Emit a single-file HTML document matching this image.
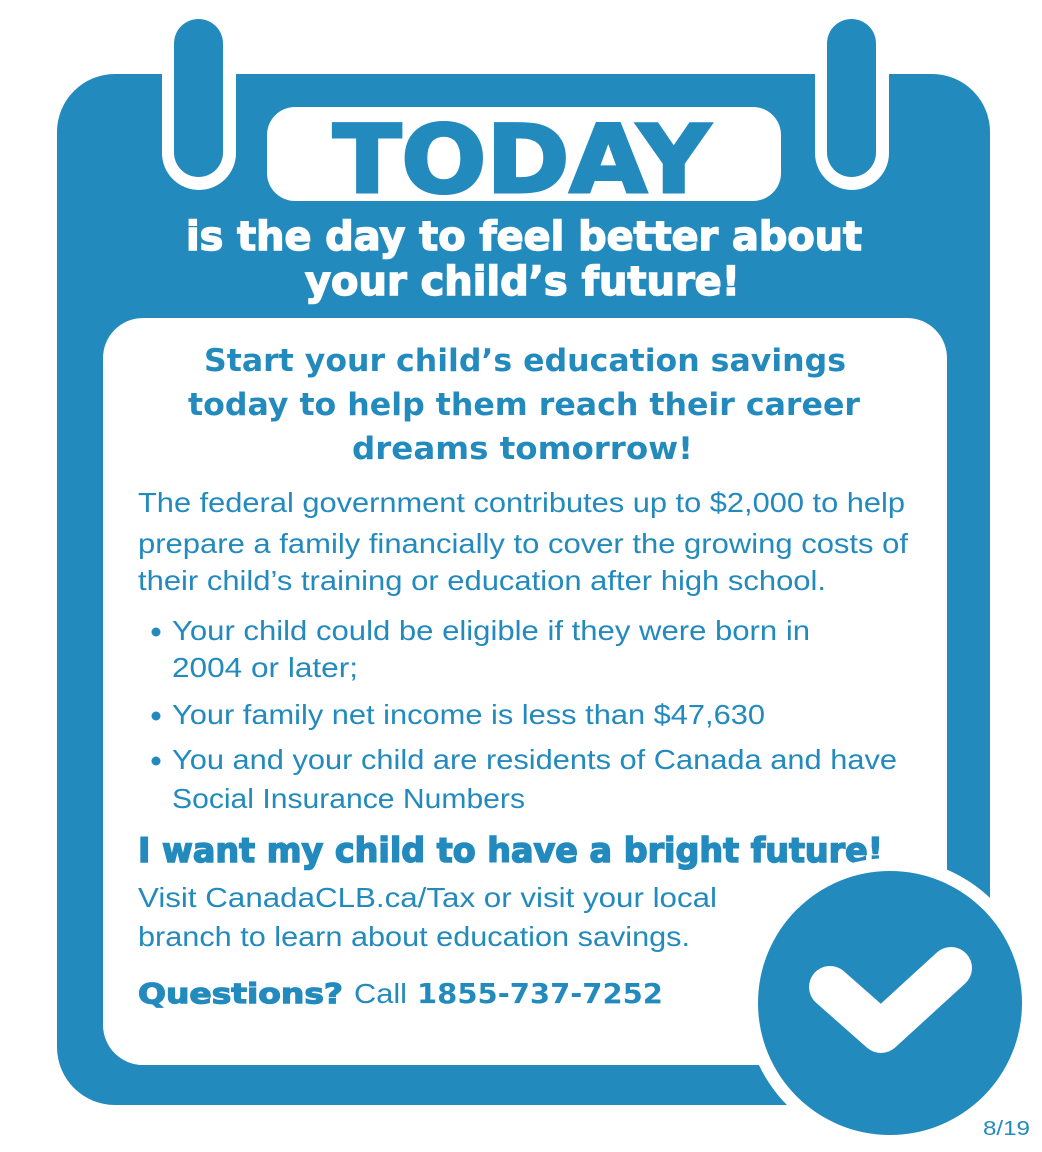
<!DOCTYPE html>
<html><head><meta charset="utf-8"><style>
html,body{margin:0;padding:0;background:#fff;width:1042px;height:1152px;overflow:hidden}
svg{display:block}
text{font-family:"Liberation Sans","DejaVu Sans",sans-serif;}
.h{font-family:"DejaVu Sans","Liberation Sans",sans-serif;font-weight:bold}
</style></head><body>
<svg width="1042" height="1152" viewBox="0 0 1042 1152" xmlns="http://www.w3.org/2000/svg">
<rect x="57" y="74" width="933" height="1031" rx="58" fill="#238abe"/>
<!-- clips -->
<rect x="162" y="10" width="74" height="180" rx="37" fill="#fff"/>
<rect x="174" y="19" width="49" height="158" rx="24.5" fill="#238abe"/>
<rect x="815" y="10" width="74" height="180" rx="37" fill="#fff"/>
<rect x="827" y="19" width="49" height="158" rx="24.5" fill="#238abe"/>
<!-- TODAY box -->
<rect x="267" y="107" width="514" height="94" rx="28" fill="#fff"/>
<text class="h" x="333" y="192" font-size="94" fill="#238abe" stroke="#238abe" stroke-width="3" textLength="377" lengthAdjust="spacingAndGlyphs">TODAY</text>
<text class="h" x="186" y="250" font-size="40" fill="#fff" stroke="#fff" stroke-width="1.5" textLength="676" lengthAdjust="spacingAndGlyphs">is the day to feel better about</text>
<text class="h" x="305" y="295" font-size="40" fill="#fff" stroke="#fff" stroke-width="1.5" textLength="435" lengthAdjust="spacingAndGlyphs">your child’s future!</text>
<!-- white panel -->
<rect x="103" y="318" width="844" height="747" rx="40" fill="#fff"/>
<text class="h" x="204" y="371" font-size="31" fill="#238abe" textLength="642" lengthAdjust="spacingAndGlyphs">Start your child’s education savings</text>
<text class="h" x="188" y="415" font-size="31" fill="#238abe" textLength="672" lengthAdjust="spacingAndGlyphs">today to help them reach their career</text>
<text class="h" x="352" y="459" font-size="31" fill="#238abe" textLength="341" lengthAdjust="spacingAndGlyphs">dreams tomorrow!</text>
<g fill="#238abe" font-size="28">
<text x="138" y="512" textLength="767" lengthAdjust="spacingAndGlyphs">The federal government contributes up to $2,000 to help</text>
<text x="138" y="553" textLength="770" lengthAdjust="spacingAndGlyphs">prepare a family financially to cover the growing costs of</text>
<text x="138" y="590" textLength="688" lengthAdjust="spacingAndGlyphs">their child’s training or education after high school.</text>
<circle cx="156" cy="632" r="4.5"/>
<text x="172" y="640" textLength="638" lengthAdjust="spacingAndGlyphs">Your child could be eligible if they were born in</text>
<text x="172" y="677" textLength="186" lengthAdjust="spacingAndGlyphs">2004 or later;</text>
<circle cx="156" cy="716" r="4.5"/>
<text x="172" y="724" textLength="593" lengthAdjust="spacingAndGlyphs">Your family net income is less than $47,630</text>
<circle cx="156" cy="761" r="4.5"/>
<text x="172" y="769" textLength="725" lengthAdjust="spacingAndGlyphs">You and your child are residents of Canada and have</text>
<text x="172" y="808" textLength="353" lengthAdjust="spacingAndGlyphs">Social Insurance Numbers</text>
<text class="h" x="138" y="862" font-size="34" stroke="#238abe" stroke-width="1.5" textLength="745" lengthAdjust="spacingAndGlyphs">I want my child to have a bright future!</text>
<text x="138" y="907" textLength="579" lengthAdjust="spacingAndGlyphs">Visit CanadaCLB.ca/Tax or visit your local</text>
<text x="138" y="946" textLength="552" lengthAdjust="spacingAndGlyphs">branch to learn about education savings.</text>
<text class="h" x="138" y="1003" stroke="#238abe" stroke-width="1.2" textLength="205" lengthAdjust="spacingAndGlyphs">Questions?</text>
<text x="354" y="1003" textLength="53" lengthAdjust="spacingAndGlyphs">Call</text>
<text class="h" x="417" y="1003" textLength="246" lengthAdjust="spacingAndGlyphs">1855-737-7252</text>
</g>
<!-- check circle -->
<circle cx="890" cy="1003" r="145" fill="#fff"/>
<circle cx="890" cy="1003" r="132" fill="#238abe"/>
<polyline points="830,987 881,1032 951,968" fill="none" stroke="#fff" stroke-width="42" stroke-linecap="round" stroke-linejoin="round"/>
<text x="983" y="1135" font-size="20" fill="#238abe" textLength="47" lengthAdjust="spacingAndGlyphs">8/19</text>
</svg>
</body></html>
